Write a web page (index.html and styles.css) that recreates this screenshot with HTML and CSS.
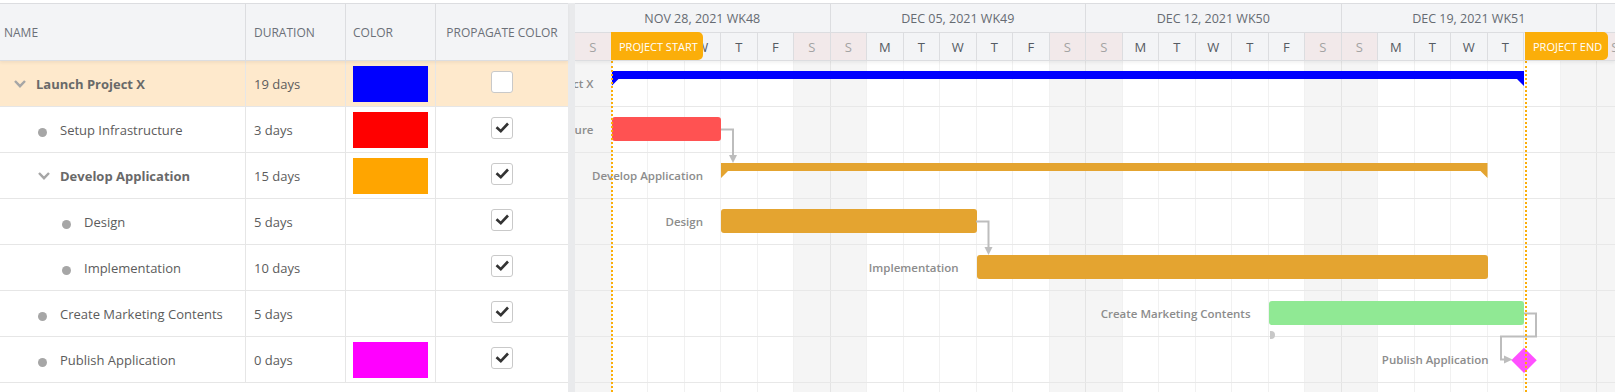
FILE: index.html
```html
<!DOCTYPE html>
<html lang="en">
<head>
  <meta charset="UTF-8" />
  <title>Gantt - Launch Project X</title>
  <link rel="stylesheet" href="styles.css">
</head>
<body>
  <div class="gantt">
    <!-- left: task grid -->
    <div class="grid">
      <div class="grid-head">
        <div class="hcell name-col">NAME</div>
        <div class="hcell">DURATION</div>
        <div class="hcell color-col">COLOR</div>
        <div class="hcell center last">PROPAGATE COLOR</div>
      </div>

      <div class="grid-row selected">
        <div class="cell name-col lvl0"><span class="icon"><svg class="chev" width="12" height="8" viewBox="0 0 12 8"><polyline points="1,1 6,6.2 11,1" /></svg></span><span class="parent">Launch Project X</span></div>
        <div class="cell">19 days</div>
        <div class="cell color-col"><span class="swatch" style="background:#0000ff"></span></div>
        <div class="cell center last"><span class="check"></span></div>
      </div>
      <div class="grid-row">
        <div class="cell name-col lvl1"><span class="icon"><span class="dot"></span></span>Setup Infrastructure</div>
        <div class="cell">3 days</div>
        <div class="cell color-col"><span class="swatch" style="background:#ff0000"></span></div>
        <div class="cell center last"><span class="check on"><svg viewBox="0 0 20 20"><polyline points="4.5,9.2 8.8,13.2 16,5.5" /></svg></span></div>
      </div>
      <div class="grid-row">
        <div class="cell name-col lvl1"><span class="icon"><svg class="chev" width="12" height="8" viewBox="0 0 12 8"><polyline points="1,1 6,6.2 11,1" /></svg></span><span class="parent">Develop Application</span></div>
        <div class="cell">15 days</div>
        <div class="cell color-col"><span class="swatch" style="background:#ffa500"></span></div>
        <div class="cell center last"><span class="check on"><svg viewBox="0 0 20 20"><polyline points="4.5,9.2 8.8,13.2 16,5.5" /></svg></span></div>
      </div>
      <div class="grid-row">
        <div class="cell name-col lvl2"><span class="icon"><span class="dot"></span></span>Design</div>
        <div class="cell">5 days</div>
        <div class="cell color-col"></div>
        <div class="cell center last"><span class="check on"><svg viewBox="0 0 20 20"><polyline points="4.5,9.2 8.8,13.2 16,5.5" /></svg></span></div>
      </div>
      <div class="grid-row">
        <div class="cell name-col lvl2"><span class="icon"><span class="dot"></span></span>Implementation</div>
        <div class="cell">10 days</div>
        <div class="cell color-col"></div>
        <div class="cell center last"><span class="check on"><svg viewBox="0 0 20 20"><polyline points="4.5,9.2 8.8,13.2 16,5.5" /></svg></span></div>
      </div>
      <div class="grid-row">
        <div class="cell name-col lvl1"><span class="icon"><span class="dot"></span></span>Create Marketing Contents</div>
        <div class="cell">5 days</div>
        <div class="cell color-col"></div>
        <div class="cell center last"><span class="check on"><svg viewBox="0 0 20 20"><polyline points="4.5,9.2 8.8,13.2 16,5.5" /></svg></span></div>
      </div>
      <div class="grid-row">
        <div class="cell name-col lvl1"><span class="icon"><span class="dot"></span></span>Publish Application</div>
        <div class="cell">0 days</div>
        <div class="cell color-col"><span class="swatch" style="background:#ff00ff"></span></div>
        <div class="cell center last"><span class="check on"><svg viewBox="0 0 20 20"><polyline points="4.5,9.2 8.8,13.2 16,5.5" /></svg></span></div>
      </div>
    </div>

    <div class="splitter"></div>

    <!-- right: timeline -->
    <div class="chart">
      <div class="chart-head">
        <div class="weeks">
          <div class="week">NOV 28, 2021 WK48</div>
          <div class="week">DEC 05, 2021 WK49</div>
          <div class="week">DEC 12, 2021 WK50</div>
          <div class="week">DEC 19, 2021 WK51</div>
          <div class="week">DEC 26, 2021 WK52</div>
        </div>
        <div class="days">
          <div class="day we">S</div><div class="day">M</div><div class="day">T</div><div class="day">W</div><div class="day">T</div><div class="day">F</div><div class="day we">S</div>
          <div class="day we">S</div><div class="day">M</div><div class="day">T</div><div class="day">W</div><div class="day">T</div><div class="day">F</div><div class="day we">S</div>
          <div class="day we">S</div><div class="day">M</div><div class="day">T</div><div class="day">W</div><div class="day">T</div><div class="day">F</div><div class="day we">S</div>
          <div class="day we">S</div><div class="day">M</div><div class="day">T</div><div class="day">W</div><div class="day">T</div><div class="day">F</div><div class="day we">S</div>
          <div class="day we">S</div>
        </div>
        <div class="marker marker-start">PROJECT START</div>
        <div class="marker marker-end">PROJECT END</div>
      </div>

      <div class="chart-body">
        <div class="day-cols">
          <div class="dc we"></div><div class="dc"></div><div class="dc"></div><div class="dc"></div><div class="dc"></div><div class="dc"></div><div class="dc we wk-end"></div>
          <div class="dc we"></div><div class="dc"></div><div class="dc"></div><div class="dc"></div><div class="dc"></div><div class="dc"></div><div class="dc we wk-end"></div>
          <div class="dc we"></div><div class="dc"></div><div class="dc"></div><div class="dc"></div><div class="dc"></div><div class="dc"></div><div class="dc we wk-end"></div>
          <div class="dc we"></div><div class="dc"></div><div class="dc"></div><div class="dc"></div><div class="dc"></div><div class="dc"></div><div class="dc we wk-end"></div>
          <div class="dc we"></div>
        </div>

        <div class="chart-rows">
          <div class="chart-row">
            <div class="task" style="left:36.5px;width:912.5px">
              <span class="label">Launch Project X</span>
              <div class="summary" style="background:#0000ff"></div>
            </div>
          </div>
          <div class="chart-row">
            <div class="task" style="left:36.5px;width:109.5px">
              <span class="label">Setup Infrastructure</span>
              <div class="bar" style="background:#ff5252"></div>
            </div>
          </div>
          <div class="chart-row">
            <div class="task" style="left:146px;width:766.5px">
              <span class="label">Develop Application</span>
              <div class="summary" style="background:#e4a430"></div>
            </div>
          </div>
          <div class="chart-row">
            <div class="task" style="left:146px;width:255.5px">
              <span class="label">Design</span>
              <div class="bar" style="background:#e4a430"></div>
            </div>
          </div>
          <div class="chart-row">
            <div class="task" style="left:401.5px;width:511px">
              <span class="label">Implementation</span>
              <div class="bar" style="background:#e4a430"></div>
            </div>
          </div>
          <div class="chart-row">
            <div class="task" style="left:693.5px;width:255.5px">
              <span class="label">Create Marketing Contents</span>
              <div class="bar" style="background:#90e994"></div>
            </div>
          </div>
          <div class="chart-row">
            <div class="task milestone" style="left:936.5px;width:25px">
              <span class="label">Publish Application</span>
              <div class="diamond" style="background:#ff50ff"></div>
            </div>
          </div>
        </div>

        <svg class="deps" width="1040" height="331" viewBox="0 0 1040 331">
          <path d="M146 68.5 H158 V95" />
          <polygon points="154,94 162,94 158,102" />
          <path d="M401 160.5 H413.5 V187" />
          <polygon points="409.5,186 417.5,186 413.5,194" />
          <path d="M949 252.5 H961 V275.5 H926 V298.5 H930" />
          <polygon points="929,294.5 929,302.5 937.5,298.5" />
          <path class="handle" d="M695 270 h1 a4 4 0 0 1 0 8 h-1 z" />
        </svg>

        <div class="range-line" style="left:36px"></div>
        <div class="range-line" style="left:950px"></div>
      </div>
    </div>
  </div>
</body>
</html>
```

FILE: styles.css
```css
* { box-sizing: border-box; }
body { margin: 0; font-family: "Open Sans", "Noto Sans", sans-serif; background: #fff; color: #5c5c5c; overflow: hidden; }

.gantt { display: flex; height: 389px; margin-top: 3px; }

/* task grid */
.grid { width: 568px; flex-shrink: 0; }
.grid-head, .grid-row {
  display: grid;
  grid-template-columns: 246px 100px 90px 132px;
}
.grid-head {
  height: 58px;
  background: #f3f4f6;
  border-top: 1px solid #dcdde0;
  border-bottom: 1px solid #dcdde0;
  box-shadow: 0 2px 3px rgba(0, 0, 0, 0.05);
  position: relative;
  z-index: 2;
}
.hcell {
  display: flex;
  align-items: center;
  padding-left: 8px;
  font-size: 12px;
  color: #6b7078;
  border-right: 1px solid #dcdde0;
}
.hcell.name-col { padding-left: 4px; }
.hcell.color-col { padding-left: 7px; }
.hcell.last, .cell.last { border-right: none; }
.center { justify-content: center; padding-left: 0; }

.grid-row { height: 46px; border-bottom: 1px solid #e6e6e6; }
.grid-row.selected { background: #fee9cc; }
.cell {
  display: flex;
  align-items: center;
  padding-left: 8px;
  font-size: 13px;
  border-right: 1px solid #e6e6e6;
}
.cell.color-col { padding: 4px 7px 4px 7px; }
.cell.center { padding-left: 0; }
.lvl0 { padding-left: 8px; }
.lvl1 { padding-left: 32px; }
.lvl2 { padding-left: 56px; }
.icon { width: 24px; margin-right: 4px; display: flex; justify-content: center; align-items: center; }
.chev polyline { fill: none; stroke: #a6a6a6; stroke-width: 2.4; }
.dot { width: 9px; height: 9px; border-radius: 50%; background: #a6a6a6; margin: 5px 3px 0 0; }
.parent { font-weight: 700; color: #696969; }
.swatch { display: block; width: 100%; height: 36px; }
.check {
  width: 22px;
  height: 22px;
  border: 1px solid #c9c9c9;
  border-radius: 3px;
  background: #fff;
  margin-top: -3px;
}
.check svg { display: block; width: 20px; height: 20px; }
.check polyline { fill: none; stroke: #333; stroke-width: 2.6; }

.splitter { width: 7px; flex-shrink: 0; background: #e9eaec; }

/* timeline */
.chart { flex: 1; min-width: 0; overflow: hidden; display: flex; flex-direction: column; }
.chart-head {
  position: relative;
  z-index: 4;
  height: 58px;
  background: #f3f4f6;
  border-top: 1px solid #dcdde0;
  border-bottom: 1px solid #dcdde0;
  box-shadow: 0 2px 3px rgba(0, 0, 0, 0.05);
}
.weeks, .days { display: flex; }
.weeks { height: 29px; border-bottom: 1px solid #dcdde0; }
.week {
  flex: 0 0 255.5px;
  border-right: 1px solid #dcdde0;
  display: flex;
  align-items: center;
  justify-content: center;
  font-size: 12.5px;
  color: #666b72;
  white-space: nowrap;
}
.days { height: 27px; }
.day {
  flex: 0 0 36.5px;
  border-right: 1px solid #dcdde0;
  display: flex;
  align-items: center;
  justify-content: center;
  font-size: 13px;
  color: #555b63;
}
.day.we { background: #f2e9ea; color: #a3a3a3; }

.marker {
  position: absolute;
  top: 28px;
  height: 28px;
  background: #fbae0a;
  color: #fff;
  font-size: 11px;
  display: flex;
  align-items: center;
  padding-left: 8px;
  border-radius: 0 5px 5px 0;
  white-space: nowrap;
}
.marker-start { left: 36px; width: 92px; }
.marker-end { left: 950px; width: 83px; }

.chart-body { position: relative; flex: 1; }
.day-cols { position: absolute; top: 0; left: 0; bottom: 0; display: flex; z-index: 0; }
.dc { flex: 0 0 36.5px; border-right: 1px solid #f1f1f1; }
.dc.we { background: #f5f5f5; }
.dc.wk-end { border-right-color: #e4e4e4; }

.chart-rows { position: relative; z-index: 1; }
.chart-row { position: relative; height: 46px; border-bottom: 1px solid #e8e8e8; }

.task { position: absolute; top: 0; bottom: 0; }
.label {
  position: absolute;
  right: calc(100% + 18px);
  top: 0;
  bottom: 0;
  display: flex;
  align-items: center;
  white-space: nowrap;
  font-size: 11.5px;
  font-weight: 600;
  color: #8c8c8c;
}
.milestone .label { right: calc(100% + 23px); }
.bar { position: absolute; left: 0; right: 0; top: 10px; height: 24px; border-radius: 3px; }
.summary {
  position: absolute;
  left: 0;
  right: 0;
  top: 10px;
  height: 15px;
  clip-path: polygon(0 0, 100% 0, 100% 100%, calc(100% - 7px) 8px, 7px 8px, 0 100%);
}
.diamond {
  position: absolute;
  left: 50%;
  top: 50%;
  width: 17.5px;
  height: 17.5px;
  transform: translate(-50%, -50%) rotate(45deg);
}

.deps { position: absolute; top: 0; left: 0; z-index: 2; pointer-events: none; }
.deps path { fill: none; stroke: #bdbdbd; stroke-width: 2; }
.deps polygon { fill: #bdbdbd; }
.deps .handle { fill: #c8c8c8; stroke: none; }

.range-line {
  position: absolute;
  top: 0;
  bottom: 0;
  width: 0;
  border-left: 2px dotted #fbae0a;
  z-index: 3;
}
```
